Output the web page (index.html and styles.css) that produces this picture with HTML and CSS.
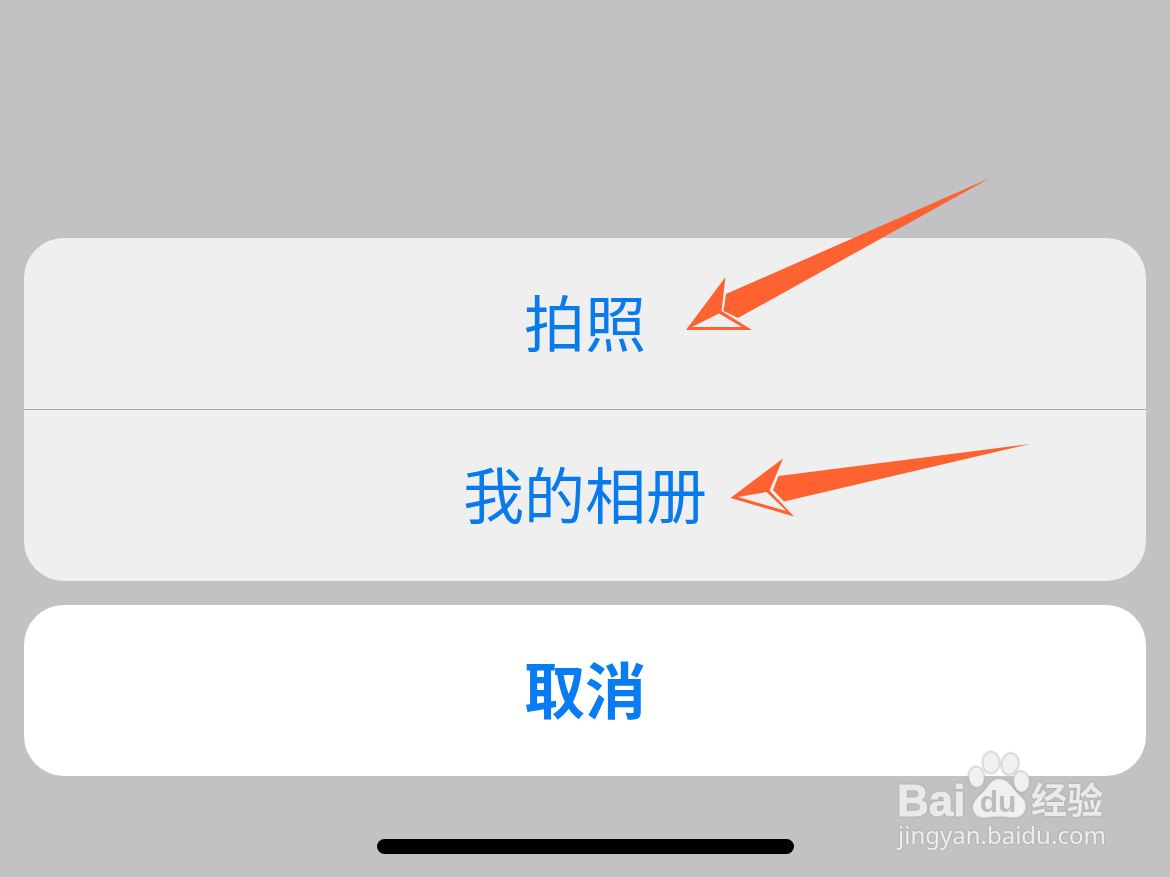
FILE: index.html
```html
<!DOCTYPE html>
<html lang="zh-CN">
<head>
<meta charset="utf-8">
<meta name="viewport" content="width=device-width, initial-scale=1">
<title>拍照</title>
<link rel="stylesheet" href="styles.css">
</head>
<body>
<main class="screen">
  <div class="sheet">
    <div class="group">
      <button class="action" type="button">拍照
        <svg class="arrow arrow-photo" viewBox="684 174 312 162" aria-hidden="true">
          <path class="shaft" d="M726 294L990 178L738 318L723.500 311Z"/>
          <path class="head" fill-rule="evenodd" d="M686 330L725.500 277L721.500 311L752 330ZM692 327L742 327L719 313.500Z"/>
        </svg>
      </button>
      <button class="action" type="button">我的相册
        <svg class="arrow arrow-album" viewBox="728 440 306 80" aria-hidden="true">
          <path class="shaft" d="M778.500 476L1030 444L784 501.500L773 490Z"/>
          <path class="head" fill-rule="evenodd" d="M730.500 498L783 458.500L769.500 490.500L794 516.500ZM738 497L786.500 511L766.500 492Z"/>
        </svg>
      </button>
    </div>
    <button class="action cancel" type="button">取消</button>
  </div>
  <div class="home-bar"></div>
  <div class="watermark">
    <svg class="logo" viewBox="0 0 210 72" role="img" aria-label="Baidu 经验">
      <text class="word" x="-1" y="68">Bai</text>
      <g class="paw">
        <ellipse cx="78.500" cy="29" rx="7.500" ry="10" transform="rotate(-6 78.500 29)"/>
        <ellipse cx="93" cy="14.500" rx="8" ry="10.500"/>
        <ellipse cx="112" cy="16" rx="8" ry="10.500" transform="rotate(12 112 16)"/>
        <ellipse cx="123.500" cy="33.500" rx="7.500" ry="10" transform="rotate(-6 123.500 33.500)"/>
        <path d="M101 31C110 31 114 40 120 46C126 51 129 56 127 62C124 70 117 70 110 69C104 68 98 68 92 69C84 70 77 70 75 61C74 53 81 49 87 42C91 37 94 31 101 31Z"/>
      </g>
      <text class="du" x="100" y="64">du</text>
      <text class="cjk" x="133" y="66">经验</text>
    </svg>
    <span class="site">jingyan.baidu.com</span>
  </div>
</main>
</body>
</html>
```
FILE: styles.css
```css
* {
  box-sizing: border-box;
}

body {
  margin: 0;
  background: #c2c2c4;
  font-family: "Noto Sans CJK SC", sans-serif;
}

.screen {
  position: relative;
  display: flex;
  flex-direction: column;
  justify-content: flex-end;
  gap: 63px;
  min-height: 100vh;
  padding: 24px 24px 23px;
  overflow: hidden;
}

.sheet {
  display: flex;
  flex-direction: column;
  gap: 24px;
}

.group {
  display: flex;
  flex-direction: column;
  border-radius: 40px;
  background: #efeff0;
}

.action {
  position: relative;
  width: 100%;
  padding: 38px 24px 43px;
  border: 0;
  background: transparent;
  color: #087aec;
  font-family: inherit;
  font-size: 61px;
  font-weight: 400;
  line-height: 90px;
  cursor: pointer;
}

.action + .action {
  border-top: 1px solid #a9a9ab;
}

.cancel {
  border-radius: 40px;
  background: #fff;
  color: #087cf2;
  font-weight: 700;
}

.arrow {
  position: absolute;
  z-index: 1;
  fill: #fd6230;
  pointer-events: none;
}

.arrow-photo {
  top: -64px;
  left: calc(50% + 99px);
  width: 312px;
}

.arrow-album {
  top: 30px;
  left: calc(50% + 143px);
  width: 306px;
}

.home-bar {
  align-self: center;
  width: 417px;
  max-width: 60%;
  height: 15px;
  border-radius: 8px;
  background: #000;
}

.watermark {
  position: absolute;
  right: 62px;
  bottom: 27px;
  display: flex;
  flex-direction: column;
  width: 210px;
  color: #eeeeef;
  filter: drop-shadow(0 0 1px #a0a0a2);
  pointer-events: none;
}

.logo {
  width: 210px;
  height: 72px;
  overflow: visible;
  fill: #eaeaeb;
}

.word {
  font: 700 44px "Liberation Sans", sans-serif;
  stroke: #eaeaeb;
  stroke-width: 1;
}

.paw {
  fill: #f0f0f1;
  stroke: #dcdcde;
  stroke-width: 1;
}

.du {
  fill: #bdbdbf;
  font: 700 30px "Liberation Sans", sans-serif;
  text-anchor: middle;
}

.cjk {
  font: 700 36px "Noto Sans CJK SC", sans-serif;
}

.site {
  font: 400 24px/30px "Noto Sans", sans-serif;
  white-space: nowrap;
}
```
